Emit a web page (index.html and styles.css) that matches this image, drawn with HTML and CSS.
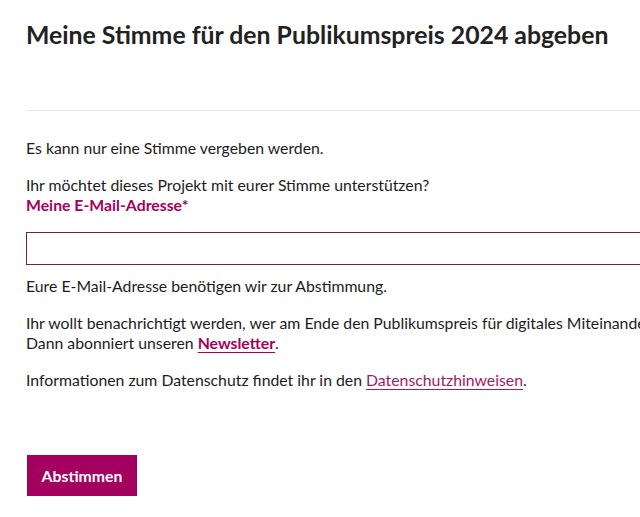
FILE: index.html
```html
<!DOCTYPE html>
<html lang="de">
<head>
<meta charset="utf-8">
<title>Publikumspreis 2024</title>
<link rel="stylesheet" href="styles.css">
</head>
<body>
<main class="vote">
  <h1 class="vote__title">Meine Stimme für den Publikumspreis 2024 abgeben</h1>
  <hr class="vote__rule">
  <form class="vote__form">
    <p class="vote__text">Es kann nur eine Stimme vergeben werden.</p>
    <p class="vote__text">Ihr möchtet dieses Projekt mit eurer Stimme unterstützen?<br><label class="vote__label" for="email">Meine E-Mail-Adresse*</label></p>
    <input class="vote__input" type="email" id="email" name="email">
    <p class="vote__text">Eure E-Mail-Adresse benötigen wir zur Abstimmung.</p>
    <p class="vote__text">Ihr wollt benachrichtigt werden, wer am Ende den Publikumspreis für digitales Miteinander gewinnt?<br>Dann abonniert unseren <a class="vote__link vote__link--strong" href="#">Newsletter</a>.</p>
    <p class="vote__text">Informationen zum Datenschutz findet ihr in den <a class="vote__link" href="#">Datenschutzhinweisen</a>.</p>
    <button class="vote__button" type="button">Abstimmen</button>
  </form>
</main>
</body>
</html>
```
FILE: styles.css
```css
html, body {
  margin: 0;
  padding: 0;
  background: #ffffff;
  overflow: hidden;
}

body {
  font-family: Lato, "Noto Sans", "Liberation Sans", sans-serif;
  color: #1c1c1c;
}

.vote {
  width: 900px;
  padding: 20px 0 0 26px;
}

.vote__title {
  margin: 0;
  font-size: 24.8px;
  line-height: 30px;
  font-weight: 700;
  color: #222222;
}

.vote__rule {
  margin: 60px 0 0 0;
  border: 0;
  border-top: 1px solid #e6e6e6;
  height: 0;
}

.vote__form {
  display: flex;
  flex-direction: column;
  align-items: flex-start;
  padding-top: 27px;
}

.vote__text {
  margin: 0 0 17px 0;
  font-size: 15.8px;
  line-height: 20px;
  white-space: nowrap;
}

.vote__label {
  color: #a3005f;
  font-weight: 700;
}

.vote__input {
  box-sizing: border-box;
  width: 100%;
  height: 33px;
  margin: 0 0 11px 0;
  border: 1px solid #731d5c;
  border-radius: 0;
  background: #ffffff;
  padding: 0 10px;
  font: inherit;
}

.vote__link {
  color: #9b1c6b;
  text-decoration: underline;
  text-decoration-thickness: 1px;
  text-underline-offset: 3px;
}

.vote__link--strong {
  color: #a3005f;
  font-weight: 700;
}

.vote__button {
  margin: 48px 0 0 1px;
  width: 110px;
  height: 41px;
  border: 0;
  border-radius: 0;
  background: #a3005f;
  color: #ffffff;
  font-family: inherit;
  font-size: 15.8px;
  font-weight: 700;
  padding: 0;
}
```
